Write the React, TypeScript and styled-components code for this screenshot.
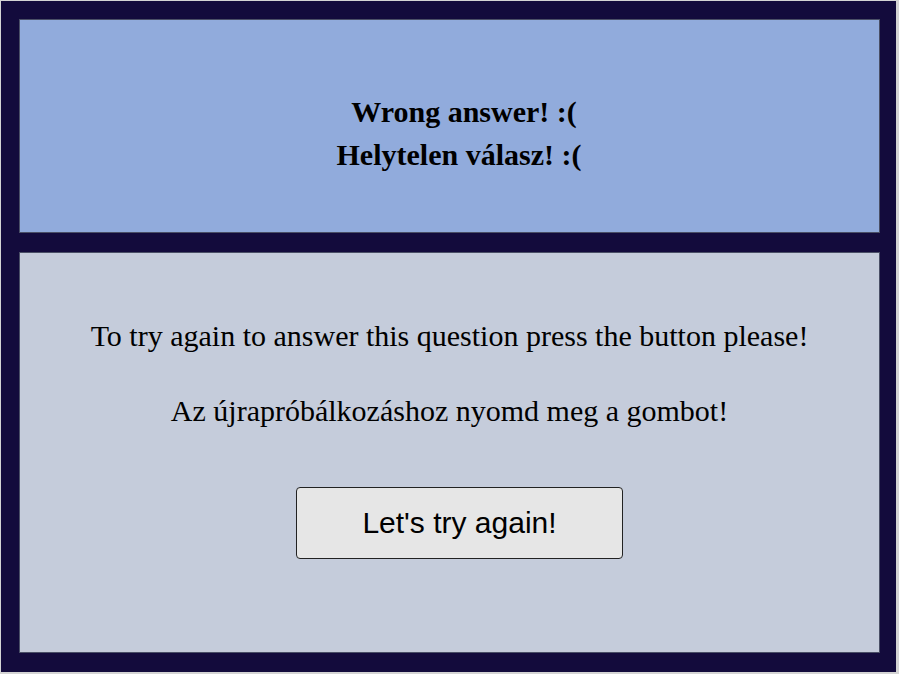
import React from "react";
import styled, { createGlobalStyle } from "styled-components";

const Global = createGlobalStyle`
  html, body { margin: 0; padding: 0; }
  body {
    background: #d4d4d4;
    font-family: "Liberation Serif", "Times New Roman", serif;
    padding: 1px 3px 2px 1px;
  }
`;

const Frame = styled.div`
  width: 895px;
  height: 671px;
  box-sizing: border-box;
  background: #130b3c;
  padding: 18px 16px 19px 18px;
  display: flex;
  flex-direction: column;
  gap: 19px;
`;

const Panel = styled.section<{ $bg: string; $h: number }>`
  background: ${(p) => p.$bg};
  border: 1px solid #4a4f66;
  height: ${(p) => p.$h}px;
  box-sizing: border-box;
  display: flex;
  flex-direction: column;
  align-items: center;
`;

const Heading = styled.h2<{ $shift: number }>`
  margin: 0;
  font-size: 30px;
  font-weight: bold;
  line-height: 43px;
  color: #000;
  padding-left: ${(p) => p.$shift}px;
`;

const HeadBlock = styled.div`
  padding-top: 70px;
  display: flex;
  flex-direction: column;
  align-items: center;
`;

const Para = styled.p`
  margin: 0;
  font-size: 30px;
  line-height: 34px;
  color: #000;
  text-align: center;
`;

const Body = styled.div`
  padding-top: 66px;
  display: flex;
  flex-direction: column;
  align-items: center;
  gap: 41px;
`;

const Button = styled.button`
  margin-top: 59px;
  margin-left: 20px;
  width: 327px;
  height: 72px;
  box-sizing: border-box;
  background: #e6e6e6;
  border: 1px solid #222;
  border-radius: 4px;
  font-family: "Liberation Sans", Arial, sans-serif;
  font-size: 30px;
  color: #000;
  cursor: pointer;
`;

export default function App() {
  return (
    <>
      <Global />
      <Frame>
        <Panel $bg="#91abdc" $h={214}>
          <HeadBlock>
            <Heading $shift={29}>Wrong answer! :(</Heading>
            <Heading $shift={19}>Helytelen válasz! :(</Heading>
          </HeadBlock>
        </Panel>
        <Panel $bg="#c5ccdb" $h={401}>
          <Body>
            <Para>To try again to answer this question press the button please!</Para>
            <Para>Az újrapróbálkozáshoz nyomd meg a gombot!</Para>
          </Body>
          <Button>Let's try again!</Button>
        </Panel>
      </Frame>
    </>
  );
}
